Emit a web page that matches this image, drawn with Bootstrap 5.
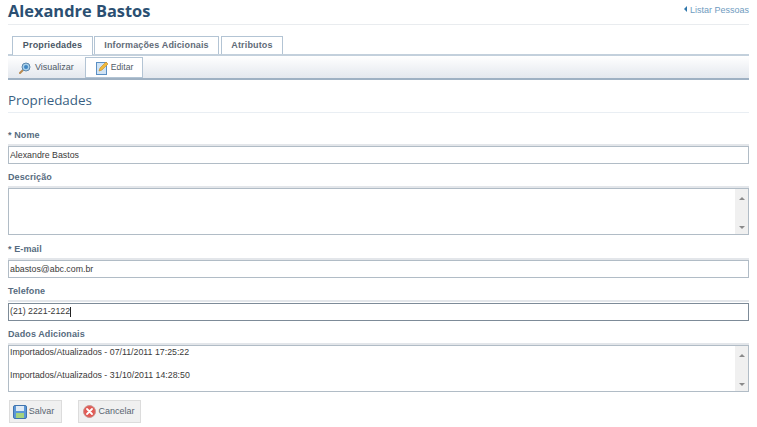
<!DOCTYPE html>
<html lang="pt"><head><meta charset="utf-8"><title>Alexandre Bastos</title>
<link href="https://cdn.jsdelivr.net/npm/bootstrap@5.3.0/dist/css/bootstrap.min.css" rel="stylesheet">
<style>
html,body{height:427px;overflow:hidden}
body{font-family:"Liberation Sans",Arial,sans-serif;font-size:9px;color:#333;background:#fff;padding:0 8px}
.pg-head{height:25px;border-bottom:1px solid #e9ecef}
.pg-title{font-family:"Open Sans",sans-serif;font-weight:700;font-size:16.4px;line-height:21px;color:#2b4f72;margin:0}
.back-link{color:#6f9cc0;text-decoration:none;font-size:9px;line-height:10px;margin-top:5px}
.back-tri{width:0;height:0;border:3px solid transparent;border-right-color:#2f77ab;border-left:0;display:inline-block;margin-right:3px;vertical-align:1px}
.tabs-row{margin-top:11px;padding-left:4px;gap:1px;height:18px}
.tab-item{height:18px;border:1px solid #b3c4d4;border-bottom:0;font-weight:700;color:#5f6b78;line-height:17px;text-align:center;letter-spacing:.15px;background:#fff}
.tab-on{height:19px;position:relative;z-index:1;color:#4a5765;background:#fff}
.tool-bar{height:26px;border-top:2px solid #c3d0dc;border-bottom:2px solid #9fb1c3;background:linear-gradient(#fff,#e4e8ee);padding-left:4px;gap:4px}
.tool-btn{height:21px;color:#4f5a66;gap:4px;padding:0 7px}
.tool-on{width:58px;border:1px solid #b3c4d4;background:#fff;margin-top:1px;gap:2px;font-size:8.6px}
.sec-title{font-family:"Open Sans",sans-serif;font-size:13.4px;line-height:19px;color:#3a5f82;margin:11px 0 0;padding-bottom:1px;height:20px;border-bottom:1px solid #e9eef3;box-sizing:content-box}
.fld-label{display:block;font-weight:700;color:#566b80;font-size:9px;line-height:11px;letter-spacing:.1px;margin:0;padding-bottom:3px;border-bottom:2px solid #e3e6ea}
.fld-box{display:block;width:100%;border:1px solid #b1bcc6;border-radius:0;padding:0 1px;background:#fff;color:#3a3a3a;font-family:inherit;font-size:8.8px;line-height:11.5px;height:18px;outline:0}
.fld-area{height:47px;position:relative;overflow:hidden;padding-top:1px}
.fld-focus{border-color:#7d8b98;margin-top:1px}
.scroll-col{position:absolute;top:0;right:0;bottom:0;width:13px;background:#f0f0f0}
.scroll-up,.scroll-dn{position:absolute;left:4px;width:0;height:0;border:3px solid transparent;border-top:0;border-bottom:3px solid #8a8a8a}
.scroll-up{top:8px}
.scroll-dn{bottom:5px;border-bottom:0;border-top:3px solid #8a8a8a}
.act-btn{height:23px;background:#f0f0f0;border:1px solid #dcdcdc;border-radius:0;color:#5a6571;font-size:9px;padding:0;gap:2px}
.act-save{width:53px;padding-right:4px}
.act-cancel{width:63px;padding-right:1px}
.cursor-mark{display:inline-block;width:1px;height:10px;background:#222}
</style></head>
<body>
<div class="pg-head d-flex justify-content-between align-items-start">
<h1 class="pg-title">Alexandre Bastos</h1>
<a class="back-link" href="#"><span class="back-tri"></span>Listar Pessoas</a>
</div>
<div class="tabs-row d-flex">
<div class="tab-item tab-on" style="width:81px">Propriedades</div>
<div class="tab-item" style="width:125px">Informações Adicionais</div>
<div class="tab-item" style="width:62px;margin-left:1px">Atributos</div>
</div>
<div class="tool-bar d-flex align-items-start">
<div class="tool-btn d-flex align-items-center" style="margin-top:1px">
<svg width="12" height="12" viewBox="0 0 12 12"><path d="M1 11l3-3" stroke="#b98a50" stroke-width="2" stroke-linecap="round"/><circle cx="7" cy="5" r="4" fill="#a8d0ea" stroke="#5b86ad"/><circle cx="7" cy="5" r="2" fill="#3f86c4"/></svg>
<span>Visualizar</span></div>
<div class="tool-btn tool-on d-flex align-items-center" style="padding-left:10px">
<svg width="13" height="14" viewBox="0 0 13 14" style="flex:none"><rect x=".5" y="1.5" width="10" height="12" fill="#cfe3f5" stroke="#5a8fc4"/><path d="M3 10l1-3 6-6 2 2-6 6z" fill="#f0b93c" stroke="#c98b20" stroke-width=".6"/></svg>
<span>Editar</span></div>
</div>
<h2 class="sec-title">Propriedades</h2>
<form>
<div style="margin-top:17px"><label class="fld-label">* Nome</label><input class="fld-box" value="Alexandre Bastos"></div>
<div style="margin-top:8px"><label class="fld-label">Descrição</label><div class="fld-box fld-area"><div class="scroll-col"><i class="scroll-up"></i><i class="scroll-dn"></i></div></div></div>
<div style="margin-top:9px"><label class="fld-label">* E-mail</label><input class="fld-box" value="abastos@abc.com.br"></div>
<div style="margin-top:8px"><label class="fld-label">Telefone</label><div class="fld-box fld-focus d-flex align-items-center">(21) 2221-2122<span class="cursor-mark"></span></div></div>
<div style="margin-top:8px"><label class="fld-label">Dados Adicionais</label><div class="fld-box fld-area">Importados/Atualizados - 07/11/2011 17:25:22<br><br>Importados/Atualizados - 31/10/2011 14:28:50<div class="scroll-col"><i class="scroll-up"></i><i class="scroll-dn"></i></div></div></div>
<div class="d-flex" style="gap:16px;margin-top:8px;padding-left:1px">
<button type="button" class="btn act-btn act-save d-flex align-items-center justify-content-center">
<svg width="14" height="14" viewBox="0 0 14 14"><rect x=".5" y=".5" width="13" height="13" rx="1.5" fill="#5c97d6" stroke="#3f73ad"/><rect x="3" y="1" width="8" height="5" fill="#dfeaf5"/><rect x="3" y="8" width="8" height="5" fill="#a4d27e"/></svg>Salvar</button>
<button type="button" class="btn act-btn act-cancel d-flex align-items-center justify-content-center">
<svg width="13" height="13" viewBox="0 0 13 13"><circle cx="6.5" cy="6.5" r="6" fill="#e25b55" stroke="#c9938f"/><path d="M4 4l5 5M9 4l-5 5" stroke="#fff" stroke-width="1.8" stroke-linecap="round"/></svg>Cancelar</button>
</div>
</form>
<script src="https://cdn.jsdelivr.net/npm/bootstrap@5.3.0/dist/js/bootstrap.bundle.min.js"></script>
</body></html>
